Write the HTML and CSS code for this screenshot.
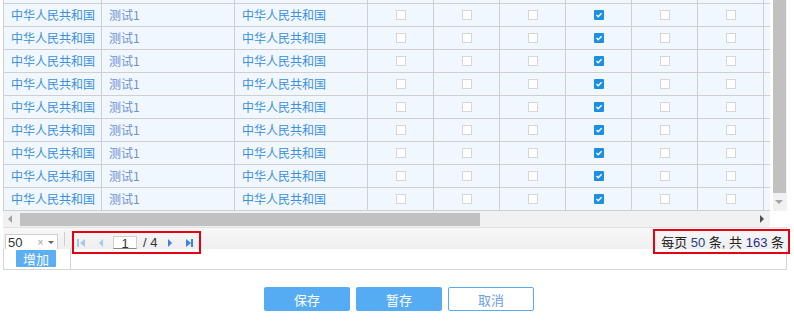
FILE: index.html
```html
<!DOCTYPE html>
<html lang="zh-CN">
<head>
<meta charset="UTF-8" />
<title>列表编辑</title>
<link rel="stylesheet" href="styles.css">
</head>
<body>
<div class="grid">
  <div class="grid-body">
    <div id="rows" class="rows"></div>
    <div class="vscroll">
      <div class="vthumb"></div>
      <div class="varrow"></div>
    </div>
  </div>
  <div class="hbar">
    <div class="htrack">
      <span class="harrow harrow-left"></span>
      <div class="hthumb"></div>
      <span class="harrow harrow-right"></span>
    </div>
    <div class="corner"></div>
  </div>
  <div class="pager">
    <div class="page-size">
      <span class="page-size-val">50</span>
      <span class="page-size-x">×</span>
      <span class="page-size-arrow"></span>
    </div>
    <span class="sep"></span>
    <div class="pager-nav mark">
      <!-- 首页 -->
      <svg class="nav-icon off" width="8" height="8" viewBox="0 0 8 8"><rect x="0" y="0" width="2" height="8"/><polygon points="8,0 3,4 8,8"/></svg>
      <!-- 上一页 -->
      <svg class="nav-icon off prev" width="4" height="8" viewBox="0 0 4 8"><polygon points="4,0 0,4 4,8"/></svg>
      <span class="page-input">1</span>
      <span class="page-total">/ 4</span>
      <!-- 下一页 -->
      <svg class="nav-icon next" width="4" height="8" viewBox="0 0 4 8"><polygon points="0,0 4,4 0,8"/></svg>
      <!-- 末页 -->
      <svg class="nav-icon last" width="7" height="8" viewBox="0 0 7 8"><polygon points="0,0 5,4 0,8"/><rect x="5" y="0" width="2" height="8"/></svg>
    </div>
    <div class="pager-info mark"><span>每页 <span class="num-a">50</span> 条, 共 <span class="num-b">163</span> 条</span></div>
  </div>
  <div class="add-row">
    <div class="add-cell"><button class="btn-add">增加</button></div>
    <div class="add-rest"></div>
  </div>
</div>
<div class="actions">
  <button class="btn btn-primary">保存</button>
  <button class="btn btn-primary">暂存</button>
  <button class="btn btn-plain">取消</button>
</div>

<script>
  const rows = document.getElementById('rows');
  const checkCols = 6;
  const checkedCol = 3;

  function makeRow(cut) {
    const row = document.createElement('div');
    row.className = cut ? 'row row-cut' : 'row';

    const texts = ['中华人民共和国', '测试1', '中华人民共和国'];
    texts.forEach((t, i) => {
      const cell = document.createElement('div');
      cell.className = i === 1 ? 'cell cell-text cell-muted' : 'cell cell-text';
      if(!cut) cell.textContent = t;
      row.appendChild(cell);
    });

    for(let i = 0; i < checkCols; i++) {
      const cell = document.createElement('div');
      cell.className = 'cell cell-check';
      if(!cut) {
        const box = document.createElement('span');
        box.className = i === checkedCol ? 'check checked' : 'check';
        if(i === checkedCol) {
          box.innerHTML = '<svg width="8" height="8" viewBox="0 0 8 8"><polyline points="1.5,4 3.2,5.8 6.6,2.2" fill="none" stroke="#fff" stroke-width="1.4"/></svg>';
        }
        cell.appendChild(box);
      }
      row.appendChild(cell);
    }

    const rest = document.createElement('div');
    rest.className = 'cell cell-rest';
    row.appendChild(rest);
    rows.appendChild(row);
  }

  makeRow(true);
  for(let r = 0; r < 9; r++) makeRow(false);
</script>
</body>
</html>
```

FILE: styles.css
```css
body {
  margin: 0;
  font-family: "Noto Sans CJK SC", "Liberation Sans", sans-serif;
  font-size: 12px;
  background: #fff;
  width: 794px;
}
.grid {
  margin-left: 3px;
  width: 784px;
}
.grid-body {
  display: flex;
}
.rows {
  width: 767px;
  box-sizing: border-box;
  border-left: 1px solid #cfcfcf;
  background: #f0f7ff;
}
.row {
  display: grid;
  grid-template-columns: 98px 133px 133px repeat(6, 66px) 1fr;
  height: 23px;
  box-sizing: border-box;
  border-bottom: 1px solid #cfcfcf;
}
.row-cut {
  height: 4px;
}
.cell {
  box-sizing: border-box;
  border-right: 1px solid #cfcfcf;
  overflow: hidden;
  white-space: nowrap;
}
.cell-rest {
  border-right: none;
}
.cell-text {
  padding-left: 7px;
  line-height: 22px;
  color: #3b8fdc;
}
.cell-muted {
  color: #6f8fd2;
}
.cell-check {
  display: flex;
  justify-content: center;
  align-items: center;
}
.check {
  width: 10px;
  height: 10px;
  box-sizing: border-box;
  border: 1px solid #d6d6d6;
  background: #fff;
  display: flex;
  justify-content: center;
  align-items: center;
}
.check.checked {
  border: none;
  border-radius: 1px;
  background: #1b8fe4;
}
.vscroll {
  width: 17px;
  display: flex;
  flex-direction: column;
  background: #f1f1f1;
  border-left: 3px solid #fff;
  box-sizing: border-box;
}
.vthumb {
  width: 13px;
  height: 193px;
  background: #c1c1c1;
}
.varrow {
  flex: 1;
  display: flex;
  justify-content: center;
  align-items: center;
}
.varrow::before {
  content: "";
  border-left: 4px solid transparent;
  border-right: 4px solid transparent;
  border-top: 4px solid #a3a3a3;
  margin-right: 2px;
}
.hbar {
  display: flex;
  height: 16px;
}
.htrack {
  width: 767px;
  background: #f1f1f1;
  display: flex;
  align-items: center;
}
.harrow {
  width: 0;
  height: 0;
  border-top: 4px solid transparent;
  border-bottom: 4px solid transparent;
}
.harrow-left {
  margin-left: 5px;
  border-right: 4px solid #a3a3a3;
}
.harrow-right {
  margin-left: auto;
  margin-right: 6px;
  border-left: 4px solid #505050;
}
.hthumb {
  margin-left: 8px;
  width: 460px;
  height: 13px;
  background: #c1c1c1;
}
.corner {
  flex: 1;
  background: #fff;
}
.pager {
  display: flex;
  align-items: flex-start;
  height: 21px;
  border-top: 1px solid #e2e2e2;
  background: linear-gradient(#f7f7f7, #efefef);
  font-size: 13px;
  color: #333;
}
.page-size {
  margin: 6px 0 0 2px;
  width: 53px;
  height: 15px;
  box-sizing: border-box;
  border: 1px solid #cfcfcf;
  border-bottom: none;
  background: #fff;
  display: flex;
  align-items: center;
  font-family: "Liberation Sans", sans-serif;
}
.page-size-val {
  margin-left: 2px;
  line-height: 14px;
  padding-top: 2px;
}
.page-size-x {
  margin-left: 15px;
  font-size: 10px;
  color: #999;
}
.page-size-arrow {
  margin-left: 5px;
  border-left: 3px solid transparent;
  border-right: 3px solid transparent;
  border-top: 3px solid #666;
}
.sep {
  margin: 4px 0 0 6px;
  width: 1px;
  height: 14px;
  background: #cfcfcf;
}
.mark {
  position: relative;
  z-index: 1;
  border: 2px solid #e60012;
  box-sizing: border-box;
  height: 23px;
  display: flex;
  align-items: center;
}
.pager-nav {
  margin: 3px 0 0 7px;
  width: 129px;
  padding-left: 3px;
}
.nav-icon.off {
  fill: #a9c6ec;
}
.nav-icon {
  fill: #3d82e0;
}
.prev {
  margin-left: 14px;
}
.page-input {
  margin-left: 10px;
  width: 24px;
  height: 13px;
  box-sizing: border-box;
  border: 1px solid #cfcfcf;
  border-bottom-color: #888;
  background: #fff;
  text-align: center;
  line-height: 13px;
  font-family: "Liberation Sans", sans-serif;
  font-size: 13px;
}
.page-total {
  margin-left: 6px;
  font-family: "Liberation Sans", sans-serif;
}
.next {
  margin-left: 11px;
}
.last {
  margin-left: 14px;
}
.pager-info {
  margin: 1px 0 0 auto;
  margin-right: -3px;
  width: 137px;
  height: 25px;
  justify-content: flex-end;
  padding-right: 4px;
  font-family: "Liberation Sans", "Noto Sans CJK SC", sans-serif;
  color: #222;
  white-space: nowrap;
}
.num-a {
  color: #1f3f86;
}
.num-b {
  color: #2c2a8c;
}
.add-row {
  display: flex;
  height: 21px;
  box-sizing: border-box;
  border-left: 1px solid #d6d6d6;
  border-right: 1px solid #d6d6d6;
  border-bottom: 1px solid #d6d6d6;
}
.add-cell {
  width: 67px;
  border-right: 1px solid #d6d6d6;
  padding: 1px 0 0 12px;
  box-sizing: border-box;
}
.btn-add {
  width: 40px;
  height: 17px;
  padding: 0;
  border: none;
  border-radius: 1px;
  background: #5aaef1;
  color: #fff;
  font-family: "Noto Sans CJK SC", sans-serif;
  font-size: 13px;
  line-height: 17px;
}
.add-rest {
  flex: 1;
}
.actions {
  margin-top: 17px;
  display: flex;
  justify-content: center;
  gap: 6px;
  padding-left: 4px;
}
.btn {
  width: 86px;
  height: 24px;
  padding: 0;
  border-radius: 2px;
  font-family: "Noto Sans CJK SC", sans-serif;
  font-size: 13px;
  box-sizing: border-box;
}
.btn-primary {
  border: none;
  background: #56acf2;
  color: #fff;
}
.btn-plain {
  border: 1px solid #56acf2;
  background: #fff;
  color: #6d9de6;
}
```
